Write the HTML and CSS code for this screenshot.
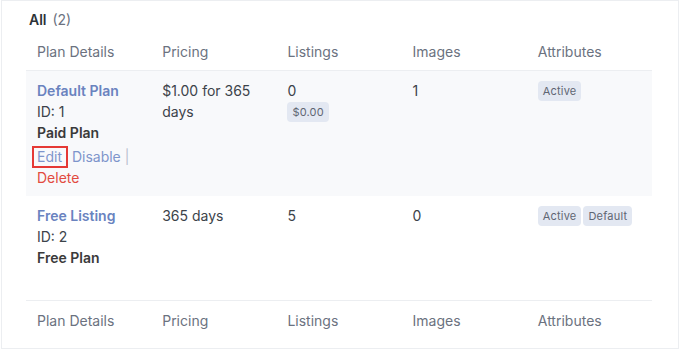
FILE: index.html
```html
<!DOCTYPE html>
<html>
<head>
<meta charset="utf-8">
<link rel="stylesheet" href="styles.css">
</head>
<body>
<div class="frame">
  <div class="title"><span class="all">All</span> <span class="count">(2)</span></div>
  <table class="plans">
    <thead>
      <tr><th>Plan Details</th><th>Pricing</th><th>Listings</th><th>Images</th><th>Attributes</th></tr>
    </thead>
    <tbody>
      <tr class="alt">
        <td>
          <a class="name">Default Plan</a>
          <div>ID: 1</div>
          <div class="type">Paid Plan</div>
          <div class="actions"><span class="edit">Edit</span> <a class="link">Disable</a> <span class="sep">|</span> <a class="delete">Delete</a></div>
        </td>
        <td>$1.00 for 365 days</td>
        <td>0<div class="badges"><span class="badge">$0.00</span></div></td>
        <td>1</td>
        <td><div class="badges top"><span class="badge">Active</span></div></td>
      </tr>
      <tr class="second">
        <td>
          <a class="name">Free Listing</a>
          <div>ID: 2</div>
          <div class="type">Free Plan</div>
        </td>
        <td>365 days</td>
        <td>5</td>
        <td>0</td>
        <td><div class="badges top"><span class="badge">Active</span><span class="badge">Default</span></div></td>
      </tr>
    </tbody>
    <tfoot>
      <tr><th>Plan Details</th><th>Pricing</th><th>Listings</th><th>Images</th><th>Attributes</th></tr>
    </tfoot>
  </table>
</div>
</body>
</html>
```

FILE: styles.css
```css
html, body {
  margin: 0;
  padding: 0;
  background: #fff;
}
body {
  font-family: Inter, "Noto Sans", "Liberation Sans", sans-serif;
  font-size: 14px;
  color: #3c434a;
}
.frame {
  margin: 0 1px;
  width: 678px;
  height: 349px;
  box-sizing: border-box;
  border: 1px solid #eceef1;
  padding: 0 25px 0 24px;
}
.title {
  padding: 10px 0 0 3px;
  line-height: 18px;
  height: 22px;
}
.all {
  font-weight: 600;
  color: #2c3338;
}
.count {
  color: #6b7280;
  margin-left: 2px;
}
.plans {
  width: 626px;
  table-layout: fixed;
  border-collapse: collapse;
}
.plans th {
  text-align: left;
  font-weight: 400;
  color: #6b7280;
  padding: 9px 11px 9px;
  line-height: 19px;
}
.plans thead th {
  border-bottom: 1px solid #eceef1;
}
.plans tfoot th {
  border-top: 1px solid #eceef1;
  padding-top: 10px;
}
.plans td {
  vertical-align: top;
  padding: 9px 22px 8px 11px;
  line-height: 21px;
  color: #3c434a;
}
.plans td:first-child {
  padding-right: 10px;
}
.plans td:last-child {
  padding-right: 4px;
}
.plans tr.alt td {
  background: #f8f9fb;
}
.plans tr.second td {
  padding-top: 9px;
  padding-bottom: 32px;
}
.name {
  color: #6a83bf;
  font-weight: 600;
  display: block;
}
.type {
  font-weight: 600;
  color: #3a3a3a;
}
.actions {
  margin-top: 3px;
  color: #7e95cb;
}
.edit {
  position: relative;
  color: #7e95cb;
}
.edit::after {
  content: "";
  position: absolute;
  left: -5px;
  right: -6px;
  top: -2px;
  bottom: -3px;
  border: 2px solid #e53935;
}
.link {
  color: #7e95cb;
  margin-left: 6px;
}
.sep {
  color: #b8c0cf;
}
.delete {
  display: block;
  color: #e24b3f;
}
.badges {
  display: flex;
  gap: 2px;
  margin-top: 1px;
}
.badge {
  display: inline-block;
  background: #e3e8f2;
  color: #5f6673;
  font-size: 11px;
  font-weight: 400;
  letter-spacing: 0.2px;
  line-height: 20px;
  padding: 0 5px;
  border-radius: 4px;
}
```
